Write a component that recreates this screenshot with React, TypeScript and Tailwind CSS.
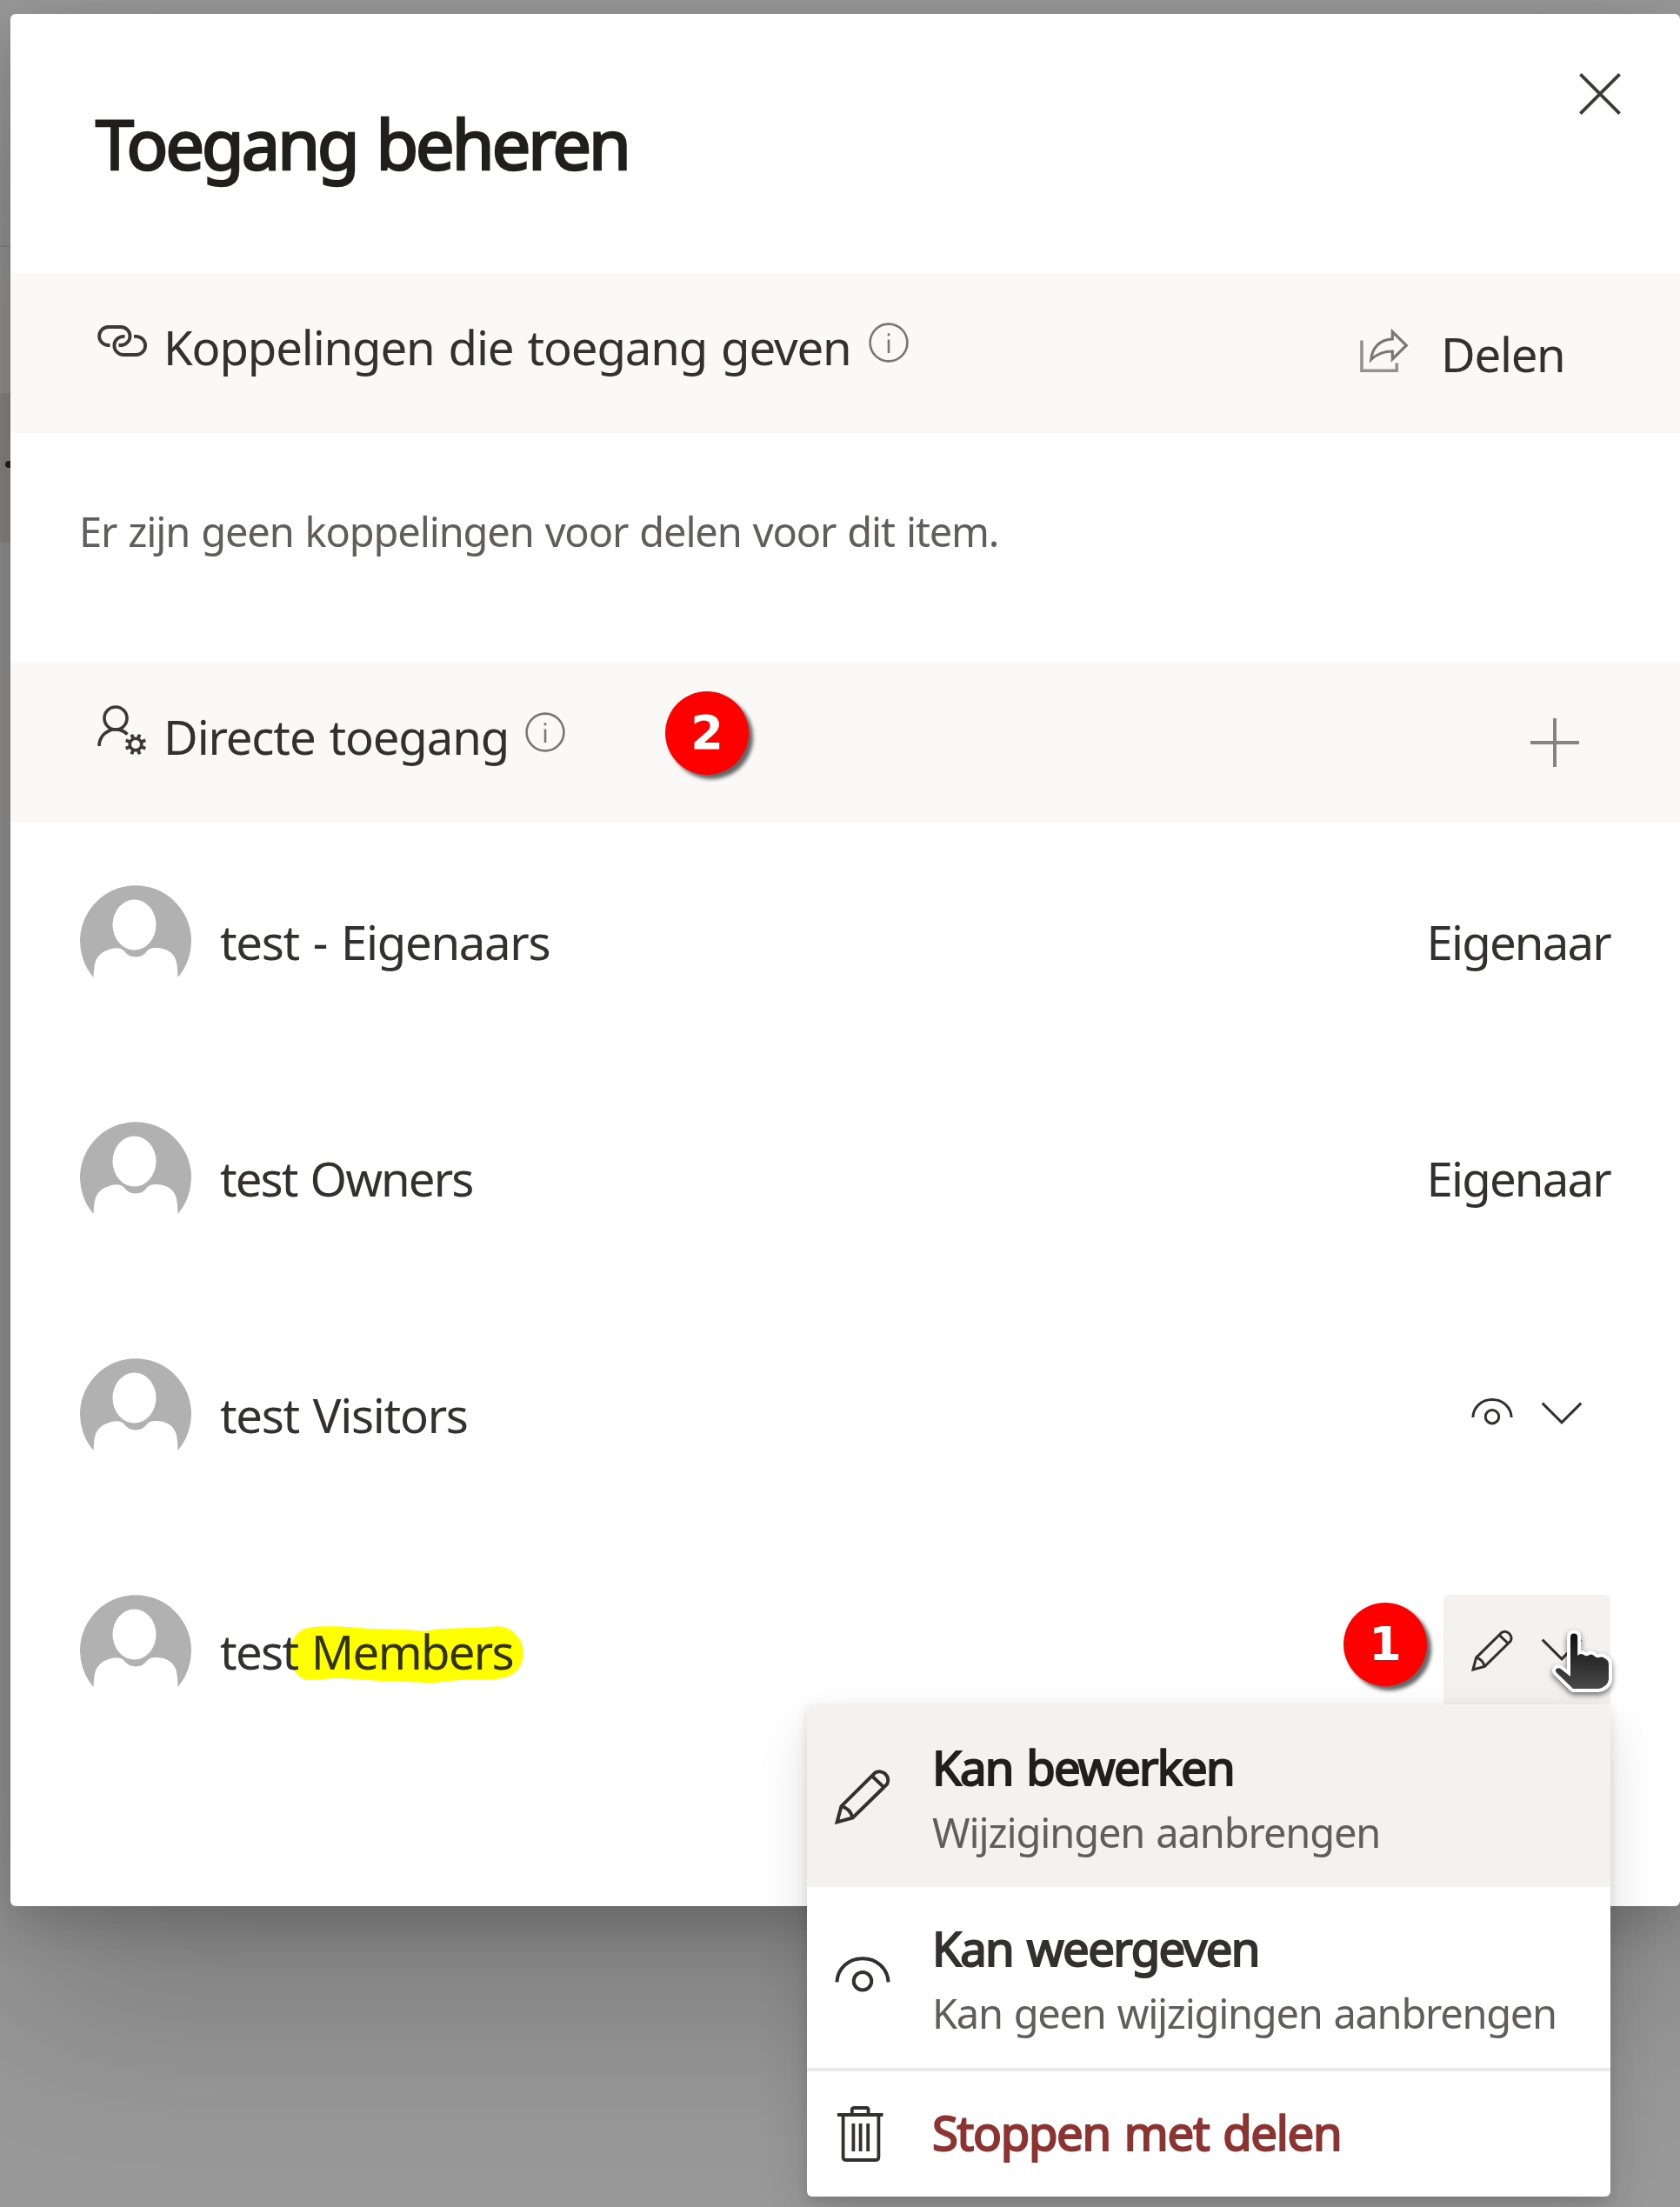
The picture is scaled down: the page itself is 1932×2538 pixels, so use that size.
import React from 'react';

type IconProps = { className?: string };

function CloseIcon() {
  return (
    <svg viewBox="0 0 48 48" className="mt-[68px] mr-[68px] size-12 shrink-0" fill="none" stroke="#3b3a39" strokeWidth="3.8">
      <path d="M1.4 1.4 46.6 46.6M46.6 1.4 1.4 46.6" />
    </svg>
  );
}

function LinkIcon() {
  return (
    <svg viewBox="0 0 56 56" className="size-14 overflow-visible" fill="none" stroke="#3b3a39" strokeWidth="3.8">
      <path d="M14.5 33H12.6A10.5 10.5 0 0 1 12.6 12H27A10.5 10.5 0 0 1 27 33H24.5" />
      <path d="M31.5 22.8H30A10.6 10.6 0 0 0 30 44H44.5A10.6 10.6 0 0 0 44.5 22.8H42" />
    </svg>
  );
}

const gearTeeth = [22.5, 67.5, 112.5, 157.5, 202.5, 247.5, 292.5, 337.5];

function PersonGearIcon() {
  return (
    <svg viewBox="0 0 56 56" className="size-14 overflow-visible" fill="none" stroke="#3b3a39" strokeWidth="3.6">
      <circle cx="21" cy="14" r="13" />
      <path d="M2 46A19 19 0 0 1 34.5 32.4" />
      <circle cx="44" cy="44" r="6.8" strokeWidth="3.6" />
      {gearTeeth.map((a) => (
        <path key={a} d="M44 37V31.8" strokeWidth="3.8" transform={`rotate(${a} 44 44)`} />
      ))}
    </svg>
  );
}

function InfoIcon() {
  return (
    <svg viewBox="0 0 46 46" className="mt-[57px] size-[46px] shrink-0" fill="none" stroke="#797775" strokeWidth="2.6">
      <circle cx="23" cy="23" r="21.4" />
      <path d="M23 19.5V35M23 12.2V15.2" strokeWidth="2.6" />
    </svg>
  );
}

function ShareIcon() {
  return (
    <svg viewBox="0 0 56 52" className="mt-[64px] h-[52px] w-14 shrink-0" fill="none" stroke="#7a7876" strokeWidth="3.2">
      <path d="M2 13.5V48.3H42.3V39.5" stroke="#949290" strokeWidth="3.6" />
      <path d="M37.3 3.5V11.8C23 12.5 14 21.5 12.8 35.4C20 28.5 28 26 37.3 26V35L53.3 19.2Z" />
    </svg>
  );
}

function PlusIcon() {
  return (
    <svg viewBox="0 0 56 56" className="mt-[64px] mr-[116px] size-14 shrink-0" fill="none" stroke="#868482" strokeWidth="4">
      <path d="M28 0V56M0 28H56" />
    </svg>
  );
}

function PencilIcon({ className }: IconProps) {
  return (
    <svg viewBox="0 0 48 48" className={className} fill="none" stroke="#323130" strokeWidth="3">
      <path d="M2 46 5.6 32.4 34.6 3.6A7.4 7.4 0 0 1 45 13.4L15.4 42.4Z" />
      <path d="M32 6.2 42.4 16M6 32.4Q13.4 34.6 15.2 42.2" />
    </svg>
  );
}

function EyeIcon({ className }: IconProps) {
  return (
    <svg viewBox="0 0 48 48" className={className} fill="none" stroke="#323130" strokeWidth="3">
      <path d="M1.8 28C2.4 16.4 11.6 7.6 24 7.6S45.6 16.4 46.2 28" />
      <circle cx="24" cy="27.2" r="7.7" />
    </svg>
  );
}

function ChevronIcon() {
  return (
    <svg viewBox="0 0 48 48" className="size-12" fill="none" stroke="#323130" strokeWidth="3">
      <path d="M1.8 11.6 24 33.8 46.2 11.6" />
    </svg>
  );
}

function TrashIcon({ className }: IconProps) {
  return (
    <svg viewBox="0 0 64 64" className={className} fill="none" stroke="#323130" strokeWidth="3.8">
      <path d="M3 10H55.5M19.8 10V4.4Q19.8 2 22.2 2H36.2Q38.6 2 38.6 4.4V10M9.6 10V58.8Q9.6 62 12.8 62H47.2Q50.4 62 50.4 58.8V10" />
      <path d="M21.4 20V52M29.6 20V52M38.2 20V52" />
    </svg>
  );
}

function Avatar() {
  return (
    <svg viewBox="0 0 128 128" className="size-32 shrink-0">
      <path
        fill="#b1b1b1"
        d="M15.5 106A64 64 0 1 1 112.5 106C112.2 96 111.8 92 110.6 87C108 77.5 99 72 87.5 72C82 72 79 73 76 77C72.5 81 69 82.4 64 82.4C59 82.4 55.5 81 52 77C49 73.5 46 72.2 42 72.2C29 73 20.5 80 18 87C16.5 92 16 96 15.5 106Z"
      />
      <ellipse cx="62.5" cy="45.5" rx="25" ry="29" fill="#fff" />
    </svg>
  );
}

function Highlight() {
  return (
    <svg viewBox="0 0 264 66" preserveAspectRatio="none" className="absolute top-[9px] left-[81px] h-[66px] w-[268px] mix-blend-multiply" fill="#ffff00">
      <path d="M20 2C30 0 44 0 58 .6C85 3 110 4 130 4.2C142 4 148 6.2 156 5.2C180 1 205 3 234 .2C250 -.5 264 14 264 31C264 46 254 58 238 60C222 63 200 61 186 62.4C172 63.5 166 65.6 152 65C135 63.5 120 64 108 63.2C90 62.5 66 59.5 50 60C38 60.5 30 62.2 20 62C8 61 0 47 0 31C0 16 8 4.5 20 2Z" />
    </svg>
  );
}

function HandCursor() {
  const hand =
    'M22 9Q22 4.6 26 4.6Q30.2 4.6 30.2 9V30Q33 27 36.5 28.5Q39 31 42 30Q46 27 49 30Q52 33 55 32Q59 30.5 62 33.5Q66 35 66 40V57Q65 66 54 68H25L6 49.5Q3.5 46.5 6.5 44.8Q9 43.5 12 46L22 54Z';
  return (
    <svg viewBox="0 0 72 76" className="absolute top-[1874px] left-[1784px] h-[76px] w-[72px] overflow-visible drop-shadow-[0_3px_3px_rgba(0,0,0,0.55)]">
      <defs>
        <linearGradient id="hand" x1="0" y1="0" x2="0" y2="1">
          <stop offset="0" stopColor="#111" />
          <stop offset="1" stopColor="#484848" />
        </linearGradient>
      </defs>
      <path d={hand} fill="#fff" stroke="#fff" strokeWidth="8" strokeLinejoin="round" />
      <path d={hand} fill="url(#hand)" />
    </svg>
  );
}

function StepBadge({ label, className }: { label: string; className: string }) {
  return (
    <div
      className={`absolute flex size-24 items-center justify-center rounded-full bg-[#ff0000] font-['DejaVu_Sans'] text-[54px] leading-none font-bold text-white shadow-[5px_5px_4px_rgba(0,0,0,0.6)] ${className}`}
    >
      {label}
    </div>
  );
}

function SectionHeader({ icon, label, labelClass, action }: { icon: React.ReactNode; label: string; labelClass: string; action: React.ReactNode }) {
  return (
    <div className="flex h-[184px] items-start justify-between bg-[#faf9f8] pl-[100px]">
      <div className="flex items-start">
        <div className="mt-[50px] mr-5">{icon}</div>
        <h2 className={`mt-[47px] text-[54.5px] leading-[76px] [word-spacing:3px] whitespace-nowrap ${labelClass}`}>{label}</h2>
        <InfoIcon />
      </div>
      {action}
    </div>
  );
}

function AccessRow({ name, nameClass, marked, children }: { name: string; nameClass: string; marked?: boolean; children: React.ReactNode }) {
  return (
    <li className="h-[272px] pt-[72px] pr-20 pl-20">
      <div className="flex h-32 items-center">
        <Avatar />
        <div className={`relative mt-[2px] ml-[33px] text-[54.5px] leading-[76px] [word-spacing:3px] whitespace-nowrap ${nameClass}`}>
          {name}
          {marked && <Highlight />}
        </div>
        <div className="ml-auto">{children}</div>
      </div>
    </li>
  );
}

function OwnerLabel() {
  return <div className="mt-[2px] text-[54.5px] leading-[76px] tracking-[-1.8px]">Eigenaar</div>;
}

function PermissionButton({ active, children }: { active?: boolean; children: React.ReactNode }) {
  return (
    <button className={`flex h-32 w-48 items-center gap-8 rounded-[6px] pl-8 ${active ? 'bg-[#f3f2f1]' : ''}`}>
      {children}
      <ChevronIcon />
    </button>
  );
}

function MenuItem({ icon, title, titleClass, sub, subClass, className }: { icon: React.ReactNode; title: string; titleClass: string; sub?: string; subClass?: string; className: string }) {
  return (
    <div className={`flex items-center pl-8 ${className}`}>
      {icon}
      <div className="ml-12 self-start pt-8">
        <div className={`text-[54.5px] leading-[76px] [word-spacing:3px] whitespace-nowrap ${titleClass}`}>{title}</div>
        {sub && <div className={`mt-[5px] text-[47px] leading-[64px] [word-spacing:2px] whitespace-nowrap text-[#605e5c] ${subClass}`}>{sub}</div>}
      </div>
    </div>
  );
}

export default function App() {
  return (
    <div className="relative h-[2538px] w-[1932px] overflow-hidden bg-[#999999] pt-4 pl-3 font-['Noto_Sans','Open_Sans',sans-serif] text-[#323130]">
      {/* Page content showing left of the dialog */}
      <div className="absolute top-[282px] left-0 h-[2px] w-3 bg-[#8b8b8b]" />
      <div className="absolute top-[452px] left-0 flex h-[172px] w-3 items-start justify-end bg-[#8d8c8a]">
        <div className="mt-[78px] h-2 w-[6px] rounded-l-full bg-[#222]" />
      </div>

      <main className="relative flex h-[2176px] w-[1920px] flex-col rounded-[6px] bg-white shadow-[0_102px_230px_rgba(0,0,0,0.22),0_19px_58px_rgba(0,0,0,0.18)]">
        <header className="flex h-[298px] shrink-0 items-start justify-between pl-[98px]">
          <h1 className="mt-[105px] text-[79px] leading-[88px] tracking-[-2.9px] text-[#201f1e] [-webkit-text-stroke:2.6px_#201f1e] [word-spacing:4px]">
            Toegang beheren
          </h1>
          <CloseIcon />
        </header>

        <SectionHeader
          icon={<LinkIcon />}
          label="Koppelingen die toegang geven"
          labelClass="w-[811px] tracking-[-1.15px]"
          action={
            <div className="flex w-[368px] items-start">
              <ShareIcon />
              <div className="mt-[55px] ml-[37px] text-[54.5px] leading-[76px] tracking-[-1.3px]">Delen</div>
            </div>
          }
        />
        <p className="h-[264px] pt-[81px] pl-[79px] text-[47px] leading-[64px] tracking-[-1.15px] text-[#605e5c] [word-spacing:2px]">
          Er zijn geen koppelingen voor delen voor dit item.
        </p>

        <SectionHeader icon={<PersonGearIcon />} label="Directe toegang" labelClass="w-[416px] tracking-[-1.16px]" action={<PlusIcon />} />
        <ul>
          <AccessRow name="test - Eigenaars" nameClass="tracking-[-1.3px]">
            <OwnerLabel />
          </AccessRow>
          <AccessRow name="test Owners" nameClass="tracking-[-1.95px]">
            <OwnerLabel />
          </AccessRow>
          <AccessRow name="test Visitors" nameClass="tracking-[-1.3px]">
            <PermissionButton>
              <EyeIcon className="size-12" />
            </PermissionButton>
          </AccessRow>
          <AccessRow name="test Members" nameClass="tracking-[-1.7px]" marked>
            <PermissionButton active>
              <PencilIcon className="size-12" />
            </PermissionButton>
          </AccessRow>
        </ul>
      </main>

      <div className="absolute top-[1960px] left-[928px] w-[924px] rounded-[6px] bg-white shadow-[0_25px_58px_rgba(0,0,0,0.132),0_5px_14px_rgba(0,0,0,0.108)]">
        <div className="rounded-t-[6px] bg-[#f3f2f1] pt-[2px]">
          <MenuItem
            icon={<PencilIcon className="size-16" />}
            title="Kan bewerken"
            titleClass="tracking-[-1.75px] text-[#201f1e] [-webkit-text-stroke:2px_#201f1e]"
            sub="Wijzigingen aanbrengen"
            subClass="tracking-[-1.13px]"
            className="h-[208px]"
          />
        </div>
        <MenuItem
          icon={<EyeIcon className="size-16" />}
          title="Kan weergeven"
          titleClass="tracking-[-1.6px] [-webkit-text-stroke:2px_#323130]"
          sub="Kan geen wijzigingen aanbrengen"
          subClass="tracking-[-1.27px]"
          className="h-[208px]"
        />
        <div className="h-1 bg-[#eaeaea]" />
        <MenuItem
          icon={<TrashIcon className="size-16" />}
          title="Stoppen met delen"
          titleClass="tracking-[-1.3px] text-[#8d3331] [-webkit-text-stroke:2px_#8d3331]"
          className="h-36"
        />
      </div>

      <StepBadge label="2" className="top-[795px] left-[765px]" />
      <StepBadge label="1" className="top-[1843px] left-[1545px]" />
      <HandCursor />
    </div>
  );
}
